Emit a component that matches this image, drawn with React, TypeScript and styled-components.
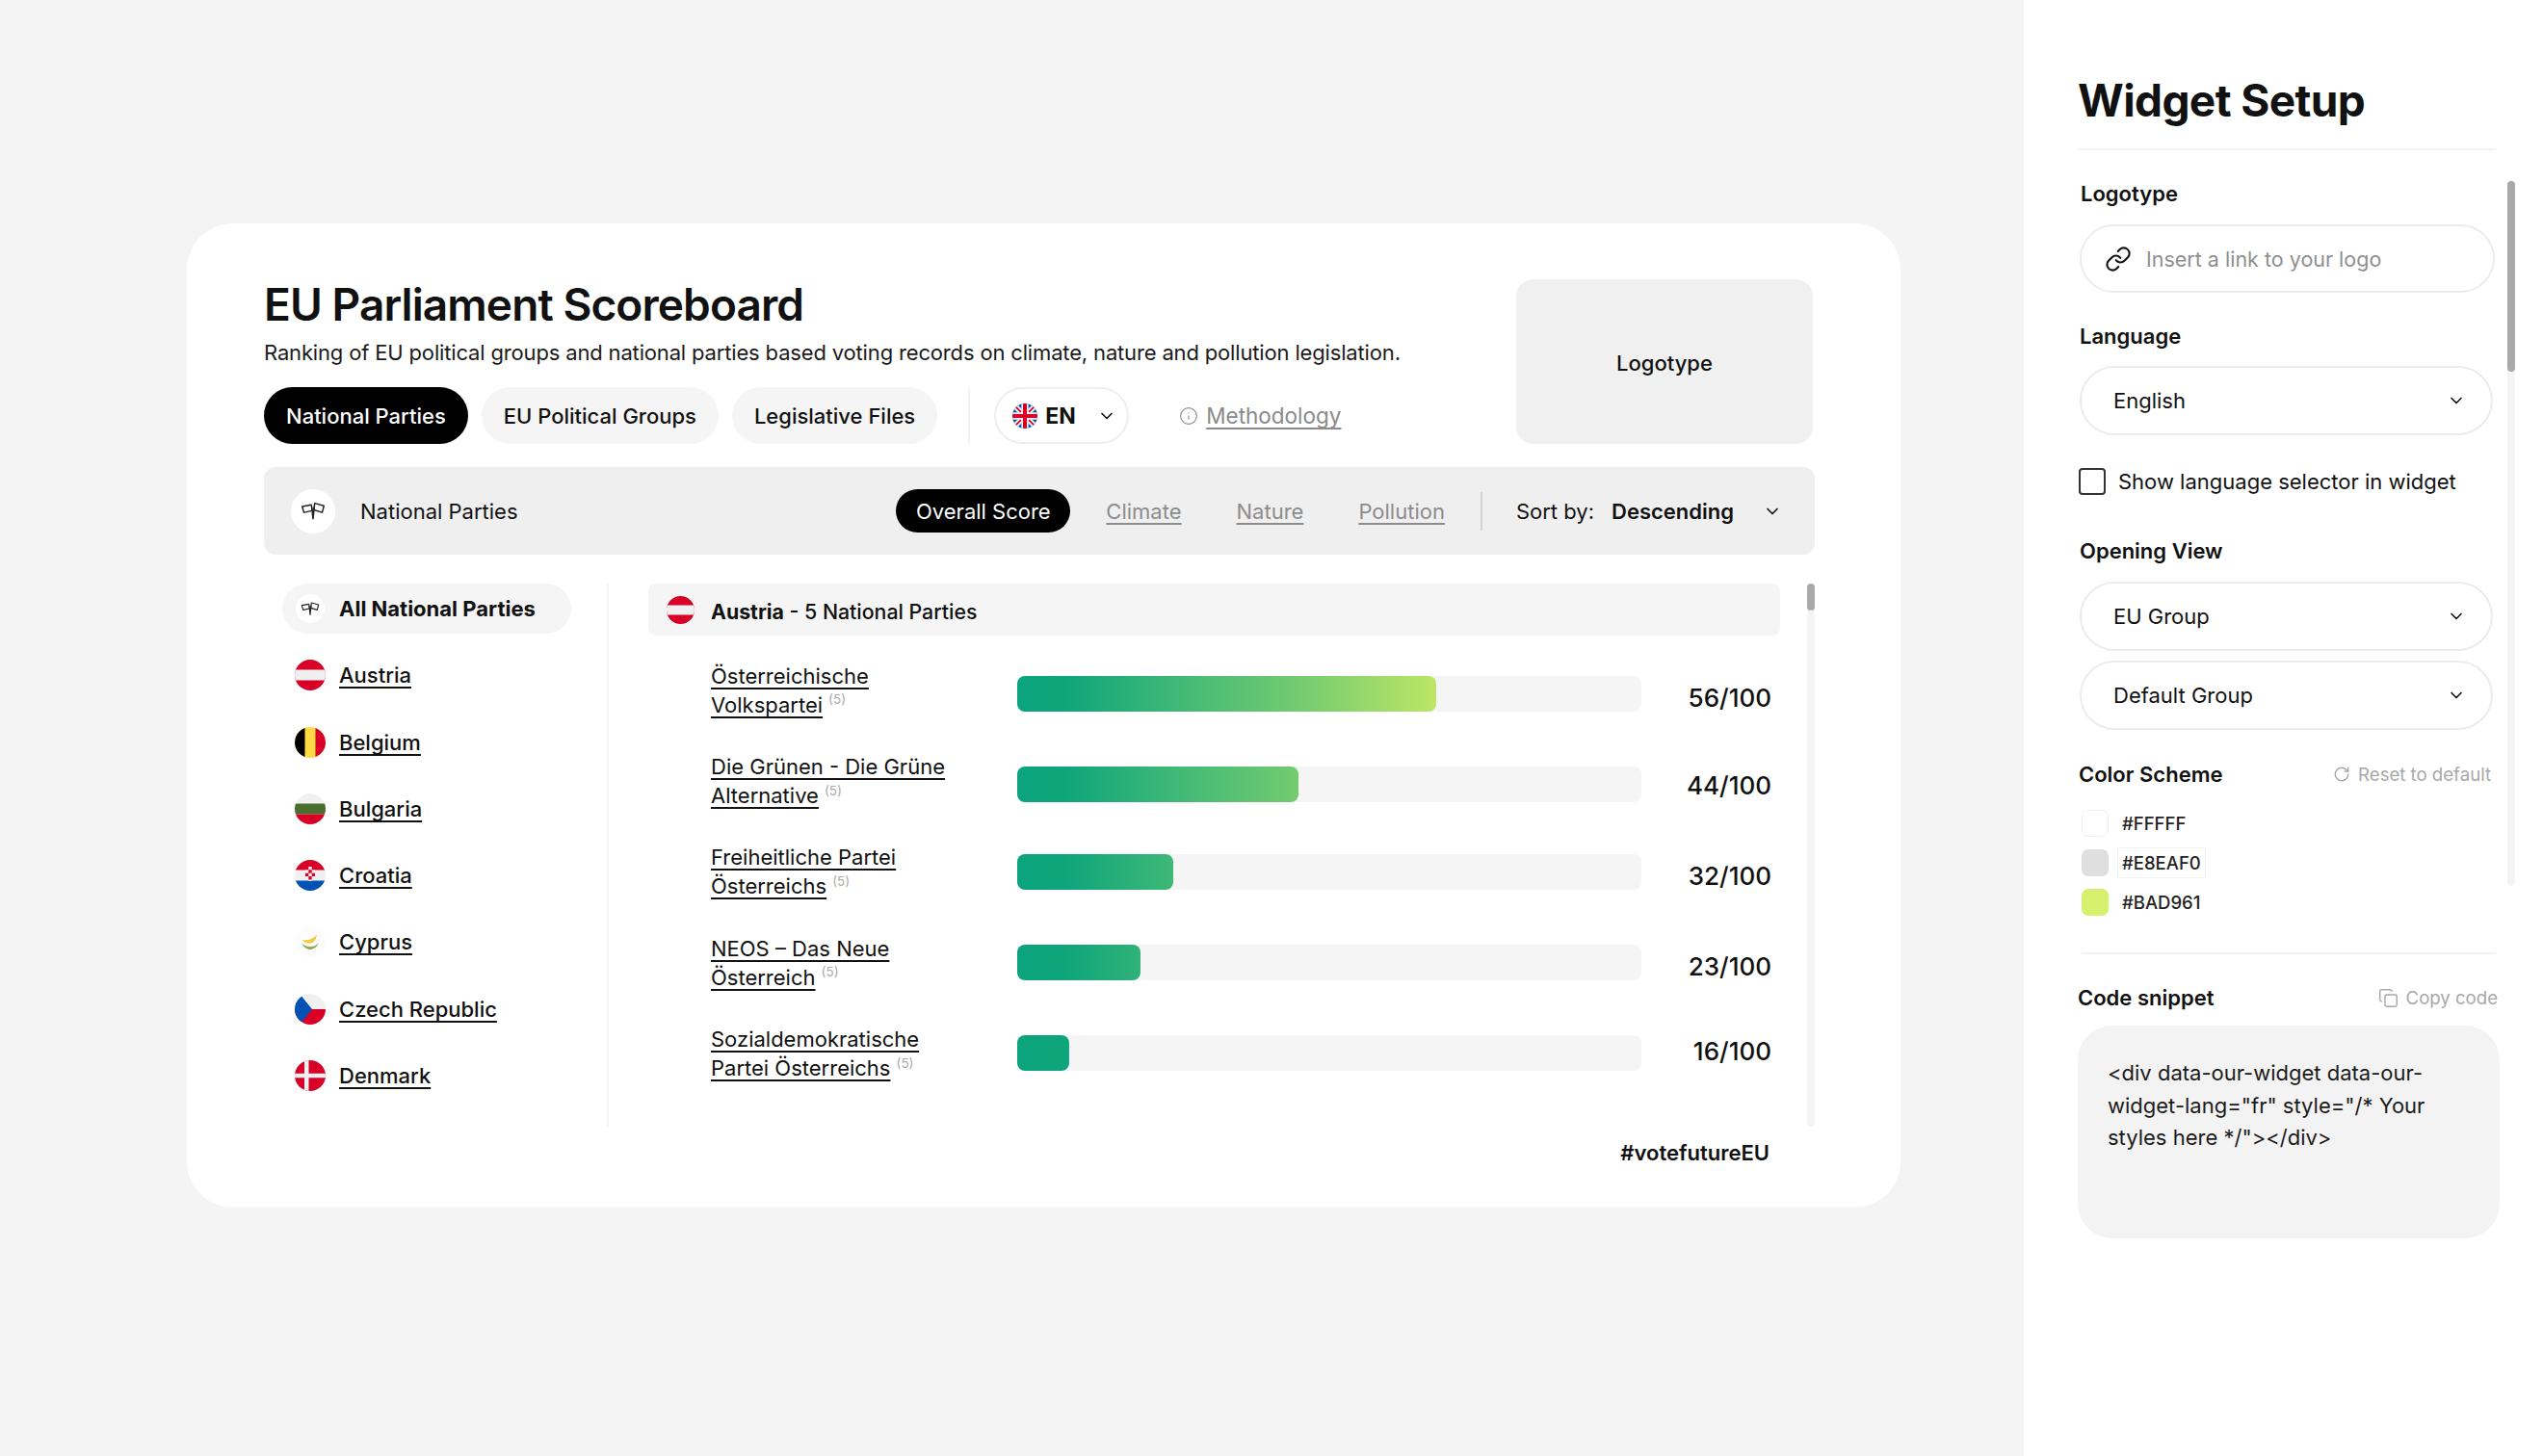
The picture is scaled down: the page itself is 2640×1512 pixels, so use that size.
import { ChevronDown, Copy, Info, Link, RotateCw } from 'lucide-react';
import styled, { createGlobalStyle } from 'styled-components';

const GlobalStyle = createGlobalStyle`
  html, body {
    margin: 0;
    padding: 0;
    background: #f4f4f4;
    font-family: Inter, "Noto Sans", sans-serif;
    color: #111;
  }
  * {
    box-sizing: border-box;
  }
`;

const COUNTRIES = ['Austria', 'Belgium', 'Bulgaria', 'Croatia', 'Cyprus', 'Czech Republic', 'Denmark'];

const PARTIES = [
  { name: 'Österreichische Volkspartei', fill: 435, score: '56/100', barNudge: 8, scoreNudge: 16 },
  { name: 'Die Grünen - Die Grüne Alternative', fill: 292, score: '44/100', barNudge: 8, scoreNudge: 10 },
  { name: 'Freiheitliche Partei Österreichs', fill: 162, score: '32/100', barNudge: 2, scoreNudge: 10 },
  { name: 'NEOS – Das Neue Österreich', fill: 128, score: '23/100', barNudge: 0, scoreNudge: 8 },
  { name: 'Sozialdemokratische Partei Österreichs', fill: 54, score: '16/100', barNudge: 0, scoreNudge: -4 },
];

const FlagsIcon = ({ size = 26 }: { size?: number }) => (
  <svg width={size} height={size * 0.8} viewBox="0 0 30 24" fill="none" stroke="#222" strokeWidth="1.7" strokeLinejoin="round">
    <path d="M2 7l11-2 1 7-10 2z" fill="#fff" />
    <path d="M17 3l11 3-2 8-10-3z" fill="#fff" />
    <path d="M13.5 8L15 22M16.5 7L15 22" />
  </svg>
);

const drawFlag = (country: string) => {
  switch (country) {
    case 'Austria':
      return (
        <>
          <rect width="32" height="32" fill="#d80027" />
          <rect y="10.5" width="32" height="11" fill="#f0f0f0" />
        </>
      );
    case 'Belgium':
      return (
        <>
          <rect width="32" height="32" fill="#ffda44" />
          <rect width="10.5" height="32" fill="#000" />
          <rect x="21.5" width="10.5" height="32" fill="#d80027" />
        </>
      );
    case 'Bulgaria':
      return (
        <>
          <rect width="32" height="32" fill="#f0f0f0" />
          <rect y="10.5" width="32" height="11" fill="#496e2d" />
          <rect y="21.5" width="32" height="10.5" fill="#d80027" />
        </>
      );
    case 'Croatia':
      return (
        <>
          <rect width="32" height="32" fill="#f0f0f0" />
          <rect width="32" height="10.5" fill="#d80027" />
          <rect y="21.5" width="32" height="10.5" fill="#0052b4" />
          <path d="M11 7h10v10a5 5 0 0 1-10 0z" fill="#f0f0f0" />
          <path d="M11 7h3.300v3.300H11zM17.700 7H21v3.300h-3.300zM14.300 10.300h3.400v3.400h-3.400zM11 13.700h3.300V17H11zM17.700 13.700H21V17h-3.300zM14.300 17h3.400v3.500h-3.400z" fill="#d80027" />
        </>
      );
    case 'Cyprus':
      return (
        <>
          <rect width="32" height="32" fill="#fcfcfc" />
          <path d="M8 14c4 1 9 0 15-5-1 5-3 8-7 8.500-4 .5-7-1-8-3.500z" fill="#f5c842" />
          <path d="M7 17c2 5 6 7 9 7s7-2 9-7c-2 2.500-5 4-9 4s-7-1.500-9-4z" fill="#8fae52" />
        </>
      );
    case 'Czech Republic':
      return (
        <>
          <rect width="32" height="16" fill="#f0f0f0" />
          <rect y="16" width="32" height="16" fill="#d80027" />
          <path d="M0 0l5 0 13 16L5 32H0z" fill="#0052b4" />
        </>
      );
    case 'Denmark':
      return (
        <>
          <rect width="32" height="32" fill="#d80027" />
          <rect x="10" width="4.500" height="32" fill="#f0f0f0" />
          <rect y="13.750" width="32" height="4.500" fill="#f0f0f0" />
        </>
      );
    default:
      return (
        <>
          <rect width="32" height="32" fill="#0052b4" />
          <path d="M0 0l32 32M32 0L0 32" stroke="#f0f0f0" strokeWidth="7" />
          <path d="M0 0l32 32M32 0L0 32" stroke="#d80027" strokeWidth="2" />
          <path d="M16 0v32M0 16h32" stroke="#f0f0f0" strokeWidth="9" />
          <path d="M16 0v32M0 16h32" stroke="#d80027" strokeWidth="5" />
        </>
      );
  }
};

const Flag = ({ country, size = 32 }: { country: string; size?: number }) => {
  const clipId = `clip-${country.replace(/\s/g, '')}-${size}`;
  return (
    <svg width={size} height={size} viewBox="0 0 32 32" style={{ flex: 'none' }}>
      <clipPath id={clipId}>
        <circle cx="16" cy="16" r="16" />
      </clipPath>
      <g clipPath={`url(#${clipId})`}>{drawFlag(country)}</g>
    </svg>
  );
};

const App = () => {
  return (
    <Page>
      <GlobalStyle />
      <Stage>
        <Card>
          <CardHead>
            <HeadText>
              <Title>EU Parliament Scoreboard</Title>
              <Description>
                Ranking of EU political groups and national parties based voting records on climate, nature and pollution legislation.
              </Description>
              <TabRow>
                <Tab $active>National Parties</Tab>
                <Tab>EU Political Groups</Tab>
                <Tab>Legislative Files</Tab>
                <TabDivider />
                <LangPill>
                  <Flag country="UK" size={26} />
                  <LangCode>EN</LangCode>
                  <ChevronDown size={20} strokeWidth={2} />
                </LangPill>
                <MethodLink>
                  <Info size={20} strokeWidth={1.4} color="#8f8f8f" />
                  <MethodText>Methodology</MethodText>
                </MethodLink>
              </TabRow>
            </HeadText>
            <LogoBox>Logotype</LogoBox>
          </CardHead>

          <Toolbar>
            <IconCircle>
              <FlagsIcon />
            </IconCircle>
            <ToolbarTitle>National Parties</ToolbarTitle>
            <ActiveFilter>Overall Score</ActiveFilter>
            <FilterLinks>
              <FilterLink>Climate</FilterLink>
              <FilterLink>Nature</FilterLink>
              <FilterLink>Pollution</FilterLink>
            </FilterLinks>
            <ToolbarDivider />
            <SortLabel>Sort by:</SortLabel>
            <SortValue>Descending</SortValue>
            <ChevronDown size={20} strokeWidth={2} />
          </Toolbar>

          <Body>
            <Sidebar>
              <AllItem>
                <SmallCircle>
                  <FlagsIcon size={20} />
                </SmallCircle>
                All National Parties
              </AllItem>
              {COUNTRIES.map((country) => (
                <CountryItem key={country}>
                  <Flag country={country} />
                  <CountryLink>{country}</CountryLink>
                </CountryItem>
              ))}
            </Sidebar>

            <Results>
              <ResultsHead>
                <Flag country="Austria" size={29} />
                <ResultsTitle>
                  <strong>Austria</strong> - 5 National Parties
                </ResultsTitle>
              </ResultsHead>
              {PARTIES.map((party) => (
                <PartyRow key={party.name}>
                  <PartyName>
                    <PartyLink>{party.name}</PartyLink>
                    <PartyCount>(5)</PartyCount>
                  </PartyName>
                  <Track $nudge={party.barNudge}>
                    <Fill style={{ width: party.fill }} />
                  </Track>
                  <Score $nudge={party.scoreNudge}>{party.score}</Score>
                </PartyRow>
              ))}
            </Results>

            <ListScroll>
              <ListThumb />
            </ListScroll>
          </Body>

          <Hashtag>#votefutureEU</Hashtag>
        </Card>
      </Stage>

      <Panel>
        <PanelTitle>Widget Setup</PanelTitle>

        <FieldLabel $top={31} $bottom={18} $inset={3}>Logotype</FieldLabel>
        <LinkInput>
          <Link size={28} strokeWidth={1.8} color="#111" />
          <Placeholder>Insert a link to your logo</Placeholder>
        </LinkInput>

        <FieldLabel $top={31}>Language</FieldLabel>
        <Select>
          English
          <ChevronDown size={20} strokeWidth={2} />
        </Select>

        <CheckRow>
          <CheckBox />
          Show language selector in widget
        </CheckRow>

        <FieldLabel $top={44} $bottom={18}>Opening View</FieldLabel>
        <Select>
          EU Group
          <ChevronDown size={20} strokeWidth={2} />
        </Select>
        <Select $top={10}>
          Default Group
          <ChevronDown size={20} strokeWidth={2} />
        </Select>

        <LabelRow $top={32} $width={428} $inset={1}>
          <RowLabel>Color Scheme</RowLabel>
          <RowAction>
            <RotateCw size={18} strokeWidth={1.8} />
            Reset to default
          </RowAction>
        </LabelRow>
        <Swatches>
          <SwatchRow>
            <Swatch $color="#ffffff" $outlined />
            <SwatchCode>#FFFFF</SwatchCode>
          </SwatchRow>
          <SwatchRow>
            <Swatch $color="#dfdfdf" />
            <SwatchCode $boxed>#E8EAF0</SwatchCode>
          </SwatchRow>
          <SwatchRow>
            <Swatch $color="#d7f06e" />
            <SwatchCode>#BAD961</SwatchCode>
          </SwatchRow>
        </Swatches>

        <PanelDivider />

        <LabelRow $top={31} $width={436} $inset={0}>
          <RowLabel>Code snippet</RowLabel>
          <RowAction>
            <Copy size={21} strokeWidth={1.6} />
            Copy code
          </RowAction>
        </LabelRow>
        <CodeBox>{'<div data-our-widget data-our-widget-lang="fr" style="/* Your styles here */"></div>'}</CodeBox>

        <PanelScroll>
          <PanelThumb />
        </PanelScroll>
      </Panel>
    </Page>
  );
};

export default App;

const Page = styled.div`
  display: flex;
  width: 2640px;
  height: 1512px;
  overflow: hidden;
  background: #f4f4f4;
`;

const Stage = styled.main`
  flex: 0 0 2101px;
  padding: 232px 0 0 194px;
`;

const Card = styled.section`
  width: 1779px;
  height: 1022px;
  padding: 58px 89px 0 80px;
  background: #fff;
  border-radius: 48px;
`;

const CardHead = styled.header`
  display: flex;
  justify-content: space-between;
  height: 171px;
  padding-right: 2px;
`;

const HeadText = styled.div`
  display: flex;
  flex-direction: column;
`;

const Title = styled.h1`
  margin: 0;
  font-size: 46px;
  line-height: 52px;
  font-weight: 600;
  letter-spacing: -0.9px;
`;

const Description = styled.p`
  margin: 10px 0 0;
  font-size: 22px;
  line-height: 28px;
  letter-spacing: -0.16px;
  color: #1a1a1a;
`;

const TabRow = styled.div`
  display: flex;
  align-items: center;
  gap: 14px;
  height: 59px;
  margin-top: auto;
`;

const Tab = styled.div<{ $active?: boolean }>`
  display: flex;
  align-items: center;
  height: 59px;
  padding: 0 23px;
  border-radius: 30px;
  font-size: 22px;
  font-weight: 500;
  color: ${({ $active }) => ($active ? '#fff' : '#111')};
  background: ${({ $active }) => ($active ? '#000' : '#f5f5f5')};
`;

const TabDivider = styled.div`
  width: 2px;
  height: 59px;
  margin: 0 11px 0 18px;
  background: #f2f2f2;
`;

const LangPill = styled.div`
  display: flex;
  align-items: center;
  width: 140px;
  height: 59px;
  padding: 0 11px 0 17px;
  border: 2px solid #eee;
  border-radius: 30px;
`;

const LangCode = styled.span`
  flex: 1;
  margin-left: 8px;
  font-size: 23px;
  font-weight: 700;
`;

const MethodLink = styled.div`
  display: flex;
  align-items: center;
  gap: 8px;
  margin-left: 38px;
  color: #8a8a8a;
  font-size: 22.5px;
`;

const MethodText = styled.span`
  text-decoration: underline;
  text-decoration-thickness: 2px;
  text-underline-offset: 4px;
  text-decoration-skip-ink: none;
`;

const LogoBox = styled.div`
  display: flex;
  align-items: center;
  justify-content: center;
  width: 308px;
  height: 171px;
  padding-top: 2px;
  border-radius: 18px;
  background: #f0f0f0;
  font-size: 22px;
  font-weight: 500;
`;

const Toolbar = styled.div`
  display: flex;
  align-items: center;
  height: 91px;
  margin-top: 24px;
  padding: 0 34px 0 28px;
  border-radius: 12px;
  background: #efefef;
`;

const IconCircle = styled.div`
  display: flex;
  align-items: center;
  justify-content: center;
  width: 46px;
  height: 46px;
  border-radius: 50%;
  background: #fff;
`;

const ToolbarTitle = styled.span`
  flex: 1;
  margin-left: 26px;
  font-size: 22px;
`;

const ActiveFilter = styled.div`
  display: flex;
  align-items: center;
  justify-content: center;
  width: 181px;
  height: 45px;
  border-radius: 23px;
  background: #000;
  color: #fff;
  font-size: 22px;
`;

const FilterLinks = styled.div`
  display: flex;
  gap: 57px;
  margin-left: 37px;
`;

const FilterLink = styled.span`
  color: #8c8c8c;
  font-size: 22px;
  text-decoration: underline;
  text-decoration-thickness: 2px;
  text-underline-offset: 4px;
  text-decoration-skip-ink: none;
`;

const ToolbarDivider = styled.div`
  width: 2px;
  height: 40px;
  margin: 0 35px 0 37px;
  background: #d4d4d4;
`;

const SortLabel = styled.span`
  font-size: 22px;
`;

const SortValue = styled.span`
  flex: 0 0 auto;
  width: 157px;
  margin-left: 18px;
  font-size: 22px;
  font-weight: 600;
`;

const Body = styled.div`
  display: flex;
  height: 564px;
  margin-top: 30px;
`;

const Sidebar = styled.nav`
  display: flex;
  flex-direction: column;
  gap: 17.3px;
  flex: 0 0 358px;
  padding-left: 19px;
  border-right: 2px solid #f6f6f6;
`;

const AllItem = styled.div`
  display: flex;
  align-items: center;
  gap: 15px;
  width: 300px;
  height: 52px;
  padding-left: 14px;
  border-radius: 26px;
  background: #f5f5f5;
  font-size: 22px;
  font-weight: 700;
`;

const SmallCircle = styled.div`
  display: flex;
  align-items: center;
  justify-content: center;
  width: 30px;
  height: 30px;
  border-radius: 50%;
  background: #fff;
`;

const CountryItem = styled.div`
  display: flex;
  align-items: center;
  gap: 14px;
  height: 52px;
  padding-left: 13px;
`;

const CountryLink = styled.span`
  font-size: 22px;
  font-weight: 500;
  text-decoration: underline;
  text-decoration-thickness: 2px;
  text-underline-offset: 4px;
  text-decoration-skip-ink: none;
`;

const Results = styled.div`
  flex: 0 0 1175px;
  margin-left: 41px;
`;

const ResultsHead = styled.div`
  display: flex;
  align-items: center;
  gap: 17px;
  height: 54px;
  margin-bottom: 9px;
  padding-left: 19px;
  border-radius: 8px;
  background: #f5f5f5;
`;

const ResultsTitle = styled.span`
  padding-top: 3px;
  font-size: 21.3px;
  font-weight: 500;

  strong {
    font-weight: 700;
  }
`;

const PartyRow = styled.div`
  display: grid;
  grid-template-columns: 318px 648px 135px;
  align-items: center;
  height: 94.3px;
  padding-left: 65px;
`;

const PartyName = styled.div`
  width: 262px;
  padding-top: 1px;
  font-size: 22px;
  line-height: 30px;
`;

const PartyLink = styled.span`
  text-decoration: underline;
  text-decoration-thickness: 2px;
  text-underline-offset: 4px;
  text-decoration-skip-ink: none;
`;

const PartyCount = styled.sup`
  margin-left: 6px;
  font-size: 13.5px;
  line-height: 0;
  color: #aaa;
`;

const Track = styled.div<{ $nudge: number }>`
  height: 37px;
  margin-top: ${({ $nudge }) => $nudge}px;
  border-radius: 8px;
  background: #f5f5f5;
`;

const Fill = styled.div`
  height: 100%;
  border-radius: 8px;
  background: linear-gradient(90deg, #0ba47c 0, #0fa57b 50px, #3db877 160px, #74cb70 292px, #bce666 435px);
`;

const Score = styled.div<{ $nudge: number }>`
  margin-top: ${({ $nudge }) => $nudge}px;
  font-size: 26px;
  font-weight: 500;
  text-align: right;
`;

const ListScroll = styled.div`
  flex: 0 0 8px;
  height: 564px;
  margin-left: 28px;
  border-radius: 4px;
  background: #f5f5f5;
`;

const ListThumb = styled.div`
  height: 28px;
  border-radius: 4px;
  background: #a9a9a9;
`;

const Hashtag = styled.div`
  margin-top: 13px;
  padding-right: 47px;
  font-size: 22px;
  line-height: 28px;
  font-weight: 600;
  text-align: right;
`;

const Panel = styled.aside`
  position: relative;
  flex: 1;
  padding: 76px 0 0 56px;
  background: #fff;
`;

const PanelTitle = styled.h2`
  width: 434px;
  height: 80px;
  margin: 0;
  border-bottom: 2px solid #f3f3f3;
  font-size: 46px;
  line-height: 56px;
  font-weight: 650;
  letter-spacing: -0.6px;
`;

const FieldLabel = styled.div<{ $top: number; $bottom?: number; $inset?: number }>`
  margin: ${({ $top }) => $top}px 0 ${({ $bottom = 17 }) => $bottom}px ${({ $inset = 2 }) => $inset}px;
  font-size: 22px;
  line-height: 28px;
  font-weight: 600;
`;

const LinkInput = styled.div`
  display: flex;
  align-items: center;
  gap: 15px;
  width: 431px;
  height: 71px;
  margin-left: 2px;
  padding-left: 24px;
  border: 2px solid #ececec;
  border-radius: 36px;
`;

const Placeholder = styled.span`
  color: #8f8f8f;
  font-size: 21.5px;
`;

const Select = styled.div<{ $top?: number }>`
  display: flex;
  align-items: center;
  justify-content: space-between;
  width: 429px;
  height: 72px;
  margin: ${({ $top = 0 }) => $top}px 0 0 2px;
  padding: 0 26px 0 33px;
  border: 2px solid #ececec;
  border-radius: 36px;
  font-size: 22px;
`;

const CheckRow = styled.label`
  display: flex;
  align-items: center;
  gap: 13px;
  height: 28px;
  margin: 34px 0 0 1px;
  font-size: 22px;
`;

const CheckBox = styled.span`
  width: 28px;
  height: 28px;
  border: 2px solid #333;
  border-radius: 4px;
`;

const LabelRow = styled.div<{ $top: number; $width: number; $inset: number }>`
  display: flex;
  align-items: center;
  justify-content: space-between;
  width: ${({ $width }) => $width}px;
  height: 28px;
  margin: ${({ $top }) => $top}px 0 15px ${({ $inset }) => $inset}px;
`;

const RowLabel = styled.span`
  font-size: 22px;
  font-weight: 600;
`;

const RowAction = styled.span`
  display: flex;
  align-items: center;
  gap: 8px;
  color: #a8a8a8;
  font-size: 18.6px;
`;

const Swatches = styled.div`
  display: flex;
  flex-direction: column;
  gap: 13px;
  margin: 23px 0 0 4px;
`;

const SwatchRow = styled.div`
  display: flex;
  align-items: center;
  gap: 14px;
  height: 28px;
`;

const Swatch = styled.span<{ $color: string; $outlined?: boolean }>`
  width: 28px;
  height: 28px;
  border-radius: 7px;
  border: ${({ $outlined }) => ($outlined ? '1px solid #f1f1f1' : 'none')};
  background: ${({ $color }) => $color};
`;

const SwatchCode = styled.span<{ $boxed?: boolean }>`
  font-size: 18.5px;
  font-weight: 500;
  color: #222;
  outline: ${({ $boxed }) => ($boxed ? '1px solid #f2f2f2' : 'none')};
  outline-offset: 4px;
`;

const PanelDivider = styled.div`
  width: 430px;
  height: 2px;
  margin: 38px 0 0 4px;
  background: #f3f3f3;
`;

const CodeBox = styled.div`
  width: 438px;
  height: 221px;
  padding: 33px 31px;
  border-radius: 36px;
  background: #f3f3f3;
  color: #1a1a1a;
  font-size: 22px;
  line-height: 33.5px;
`;

const PanelScroll = styled.div`
  position: absolute;
  top: 188px;
  left: 502px;
  width: 8px;
  height: 732px;
  border-radius: 4px;
  background: #f5f5f5;
`;

const PanelThumb = styled.div`
  height: 198px;
  border-radius: 4px;
  background: #a9a9a9;
`;
